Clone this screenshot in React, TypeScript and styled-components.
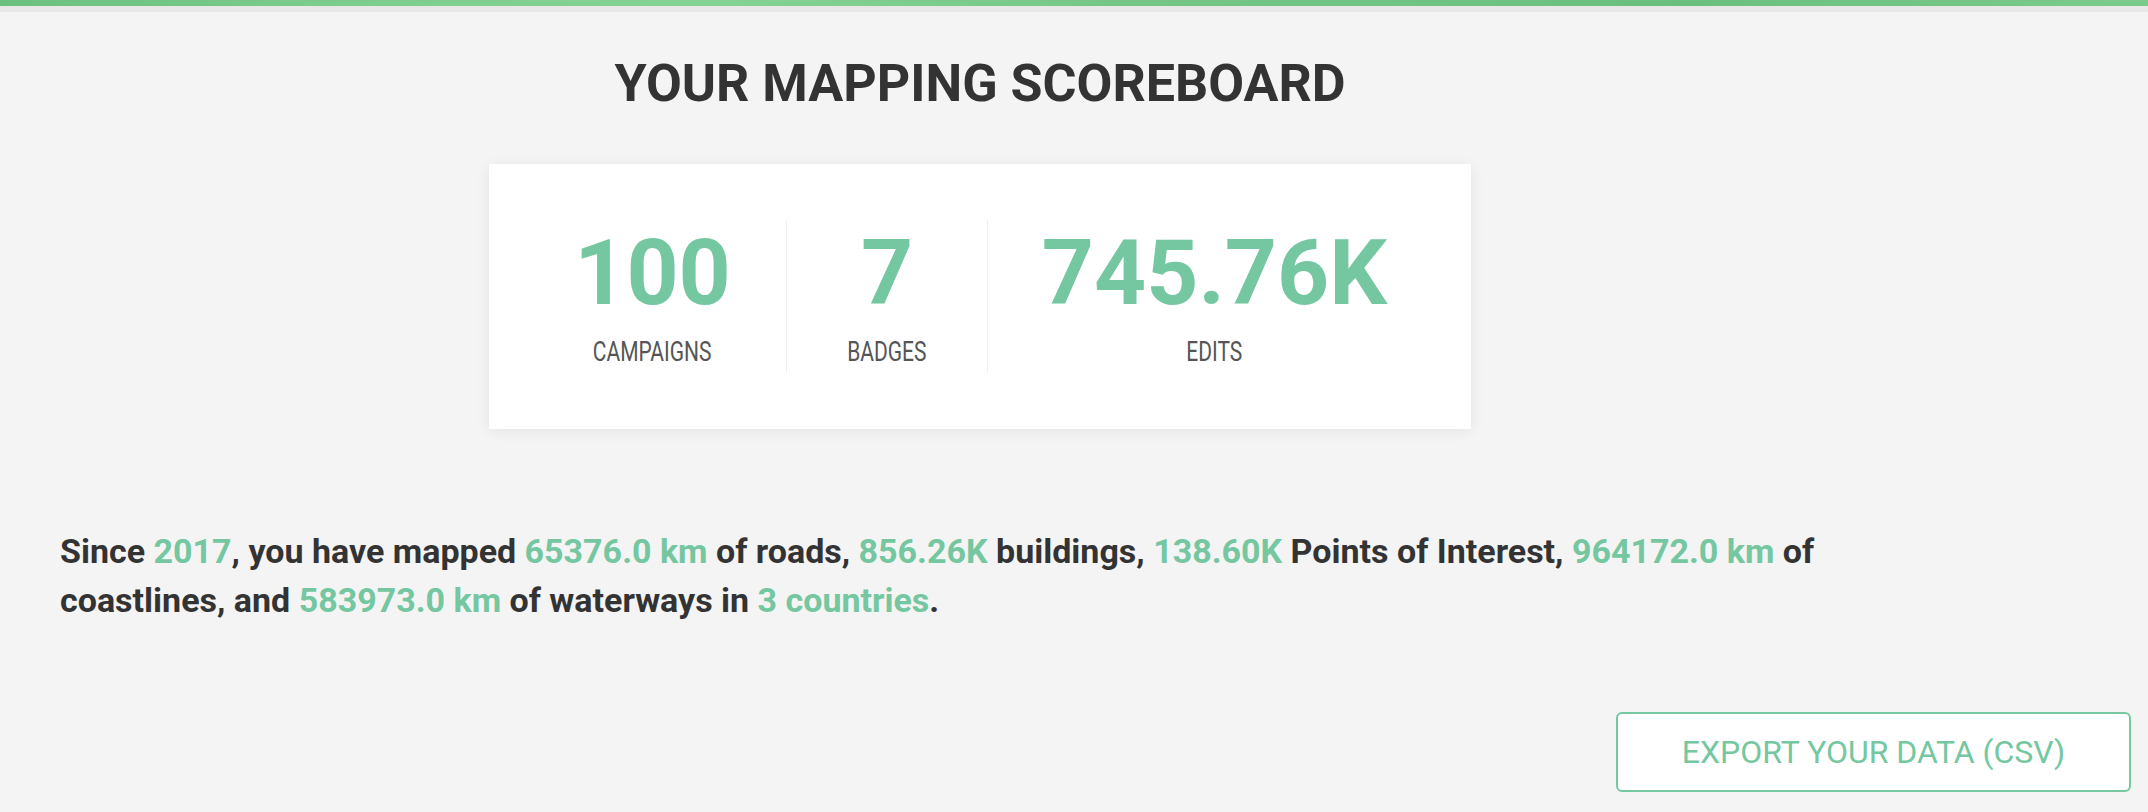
import styled, { createGlobalStyle } from "styled-components";

const GREEN = "#74c7a0";
const INK = "#333333";

const GlobalStyle = createGlobalStyle`
  html, body {
    margin: 0;
    padding: 0;
    background: #f4f4f4;
  }
  body {
    font-family: Roboto, "Liberation Sans", Arial, sans-serif;
    color: ${INK};
  }
`;

const TopBand = styled.div`
  height: 6px;
  background: linear-gradient(
    90deg,
    #6cc07f 0%,
    #7fce8e 18%,
    #86d295 33%,
    #76c787 52%,
    #6bbf7e 78%,
    #7ccb8b 100%
  );
  border-bottom: 6px solid #e8e8e8;
`;

const Page = styled.main`
  display: flex;
  flex-direction: column;
`;

const Section = styled.section`
  width: 1840px;
  margin-left: 60px;
  display: flex;
  flex-direction: column;
  align-items: center;
`;

const Title = styled.h1`
  margin: 41px 0 0;
  font-size: 52px;
  line-height: 61px;
  font-weight: 700;
  color: ${INK};
`;

const Card = styled.div`
  margin-top: 50px;
  display: flex;
  padding: 56px 30px;
  background: #fff;
  box-shadow: 0 2px 14px rgba(0, 0, 0, 0.07);
`;

const Stat = styled.div<{ $width: number }>`
  width: ${(p) => p.$width}px;
  display: flex;
  flex-direction: column;
  align-items: center;

  & + & {
    border-left: 1px solid #efefef;
  }
`;

const Value = styled.div`
  font-size: 91px;
  line-height: 106px;
  font-weight: 700;
  color: ${GREEN};
`;

const Label = styled.div`
  margin-top: 5px;
  font-size: 28px;
  line-height: 42px;
  font-weight: 400;
  color: #555;
  text-transform: uppercase;
  transform: scaleX(0.75);
`;

const Summary = styled.p`
  align-self: stretch;
  margin: 98px 0 0;
  font-size: 34px;
  line-height: 49px;
  font-weight: 700;
  color: ${INK};
`;

const Hi = styled.span`
  color: ${GREEN};
`;

const Actions = styled.div`
  margin-top: 87px;
  display: flex;
  justify-content: flex-end;
  padding-right: 17px;
`;

const ExportButton = styled.button`
  width: 515px;
  height: 80px;
  border: 2px solid ${GREEN};
  border-radius: 6px;
  background: #fff;
  color: ${GREEN};
  font-family: Roboto, "Liberation Sans", Arial, sans-serif;
  font-size: 32px;
  font-weight: 400;
  text-transform: uppercase;
  cursor: pointer;
`;

const stats = [
  { value: "100", label: "Campaigns", width: 267 },
  { value: "7", label: "Badges", width: 200 },
  { value: "745.76K", label: "Edits", width: 453 },
];

function App() {
  return (
    <>
      <GlobalStyle />
      <TopBand />
      <Page>
        <Section>
          <Title>YOUR MAPPING SCOREBOARD</Title>
          <Card>
            {stats.map((s) => (
              <Stat key={s.label} $width={s.width}>
                <Value>{s.value}</Value>
                <Label>{s.label}</Label>
              </Stat>
            ))}
          </Card>
          <Summary>
            Since <Hi>2017</Hi>, you have mapped <Hi>65376.0 km</Hi> of roads,{" "}
            <Hi>856.26K</Hi> buildings, <Hi>138.60K</Hi> Points of Interest,{" "}
            <Hi>964172.0 km</Hi> of coastlines, and <Hi>583973.0 km</Hi> of
            waterways in <Hi>3 countries</Hi>.
          </Summary>
        </Section>
        <Actions>
          <ExportButton>Export your data (CSV)</ExportButton>
        </Actions>
      </Page>
    </>
  );
}

export default App;
